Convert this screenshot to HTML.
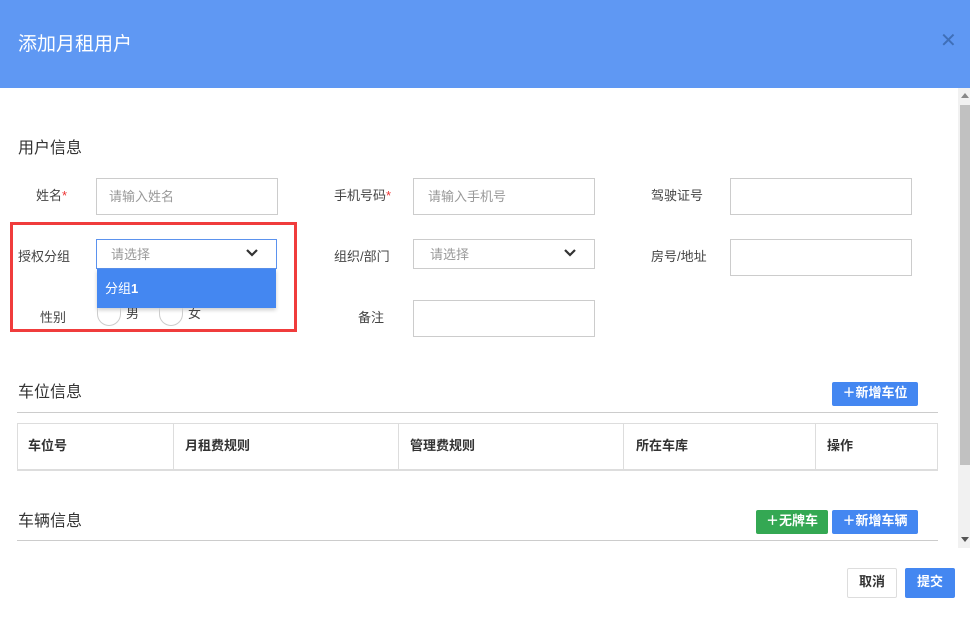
<!DOCTYPE html><html><head><meta charset="utf-8"><style>
*{box-sizing:border-box;margin:0;padding:0}
body{width:970px;height:618px;background:#fff;font-family:"Liberation Sans","Noto Sans CJK SC",sans-serif;position:relative;overflow:hidden;color:#333;font-size:13px}
.a{position:absolute}
.hd{left:0;top:0;width:970px;height:88px;background:#5f98f3}
.ttl{left:18px;top:29px;color:#fff;font-size:19px}
.x{left:940px;top:28px;color:#3f6fb8;font-size:20px}
.sec{font-size:16px;color:#333}
.lb{font-size:13px;color:#444}
.in{border:1px solid #ccc;background:#fff;height:37px;font-size:13px;color:#999;padding:7px 12px}
.star{color:#e33}
.btn{color:#fff;font-weight:bold;font-size:13px;text-align:center;border-radius:2px;height:24px;line-height:22px}
.th{font-weight:bold;font-size:13px;color:#333;top:435px}
.hr{height:1px;background:#ccc}
</style></head><body>
<div class="a hd"></div>
<div class="a ttl">添加月租用户</div>
<div class="a x">✕</div>
<div class="a" style="left:958px;top:88px;width:12px;height:460px;background:#f1f1f1"></div>
<div class="a" style="left:960px;top:105px;width:10px;height:360px;background:#c1c1c1"></div>
<div class="a" style="left:961px;top:93px;width:0;height:0;border:4px solid transparent;border-bottom:5px solid #888;border-top:0"></div>
<div class="a" style="left:961px;top:537px;width:0;height:0;border:4px solid transparent;border-top:5px solid #555;border-bottom:0"></div>

<div class="a sec" style="left:18px;top:134px">用户信息</div>
<div class="a lb" style="left:36px;top:185px">姓名<span class="star">*</span></div>
<div class="a in" style="left:96px;top:178px;width:182px">请输入姓名</div>
<div class="a lb" style="left:334px;top:185px">手机号码<span class="star">*</span></div>
<div class="a in" style="left:413px;top:178px;width:182px;padding-left:14px">请输入手机号</div>
<div class="a lb" style="left:651px;top:185px">驾驶证号</div>
<div class="a in" style="left:730px;top:178px;width:182px"></div>

<div class="a lb" style="left:18px;top:246px">授权分组</div>
<div class="a in" style="left:96px;top:239px;width:181px;height:30px;border-color:#5b92ee;padding:4px 14px">请选择</div>
<svg class="a" style="left:245px;top:248px" width="14" height="10"><path d="M2 2l5 5 5-5" stroke="#333" stroke-width="2.2" fill="none"/></svg>
<div class="a" style="left:97px;top:269px;width:179px;height:39px;background:#4487f1;color:#fff;padding:9px 8px;box-shadow:0 2px 4px rgba(0,0,0,.2)">分组<b>1</b></div>

<div class="a lb" style="left:334px;top:246px">组织/部门</div>
<div class="a in" style="left:413px;top:239px;width:182px;height:30px;padding:4px 16px">请选择</div>
<svg class="a" style="left:563px;top:248px" width="14" height="10"><path d="M2 2l5 5 5-5" stroke="#333" stroke-width="2.2" fill="none"/></svg>
<div class="a lb" style="left:651px;top:246px">房号/地址</div>
<div class="a in" style="left:730px;top:239px;width:182px"></div>

<div class="a lb" style="left:40px;top:307px">性别</div>
<div class="a" style="left:97px;top:308px;width:24px;height:18px;border:1px solid #ccc;border-top:none;border-radius:0 0 12px 12px"></div>
<div class="a lb" style="left:126px;top:303px;clip-path:inset(5px 0 0 0)">男</div>
<div class="a" style="left:159px;top:308px;width:24px;height:18px;border:1px solid #ccc;border-top:none;border-radius:0 0 12px 12px"></div>
<div class="a lb" style="left:188px;top:303px;clip-path:inset(5px 0 0 0)">女</div>
<div class="a" style="left:10px;top:222px;width:287px;height:110px;border:3px solid #f03c3c"></div>

<div class="a lb" style="left:358px;top:307px">备注</div>
<div class="a in" style="left:413px;top:300px;width:182px"></div>

<div class="a sec" style="left:18px;top:378px">车位信息</div>
<div class="a btn" style="left:832px;top:382px;width:86px;background:#4487f1">＋新增车位</div>
<div class="a hr" style="left:17px;top:412px;width:921px"></div>
<div class="a" style="left:17px;top:423px;width:921px;height:48px;border:1px solid #ddd;border-bottom:2px solid #ddd"></div>
<div class="a" style="left:173px;top:423px;width:1px;height:48px;background:#ddd"></div>
<div class="a" style="left:398px;top:423px;width:1px;height:48px;background:#ddd"></div>
<div class="a" style="left:623px;top:423px;width:1px;height:48px;background:#ddd"></div>
<div class="a" style="left:815px;top:423px;width:1px;height:48px;background:#ddd"></div>
<div class="a th" style="left:28px">车位号</div>
<div class="a th" style="left:185px">月租费规则</div>
<div class="a th" style="left:410px">管理费规则</div>
<div class="a th" style="left:636px">所在车库</div>
<div class="a th" style="left:827px">操作</div>

<div class="a sec" style="left:18px;top:507px">车辆信息</div>
<div class="a btn" style="left:756px;top:510px;width:72px;background:#34a853">＋无牌车</div>
<div class="a btn" style="left:832px;top:510px;width:86px;background:#4487f1">＋新增车辆</div>
<div class="a hr" style="left:17px;top:540px;width:921px"></div>

<div class="a" style="left:847px;top:568px;width:50px;height:30px;border:1px solid #ddd;border-radius:2px;text-align:center;line-height:26px;font-weight:bold;color:#333">取消</div>
<div class="a btn" style="left:905px;top:568px;width:50px;height:30px;line-height:27px;background:#4487f1">提交</div>
</body></html>
